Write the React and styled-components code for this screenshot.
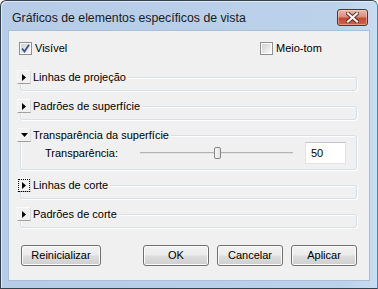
import React from 'react';
import styled, { createGlobalStyle } from 'styled-components';

const GlobalStyle = createGlobalStyle`
  html, body { margin: 0; padding: 0; background: #ffffff; }
  body {
    font-family: "Liberation Sans", Arial, sans-serif;
    font-size: 11px;
    color: #000;
  }
  * { box-sizing: border-box; }
`;

const Window = styled.div`
  width: 378px;
  height: 289px;
  display: flex;
  flex-direction: column;
  border: 1px solid #33414f;
  border-right-color: #3a8fb5;
  border-radius: 6px 6px 0 0;
  padding: 0 7px 7px;
  background: linear-gradient(90deg, #b6cce7 0%, #bcd1ea 90%, #c9dcf1 100%);
  box-shadow: inset 1px 1px 0 rgba(255, 255, 255, 0.55);
`;

const TitleBar = styled.div`
  height: 29px;
  flex: none;
  display: flex;
  align-items: flex-start;
  padding-left: 4px;
`;

const Title = styled.div`
  margin-top: 10px;
  font-size: 12.3px;
  line-height: 15px;
  color: #1b1b1b;
  white-space: nowrap;
`;

const CloseButton = styled.div`
  margin: 8px 2px 0 auto;
  width: 31px;
  height: 17px;
  border: 1px solid #6e2a24;
  border-radius: 3px;
  background: linear-gradient(180deg, #eeb9ad 0%, #dd8d7d 45%, #c6492f 55%, #cf6249 100%);
  box-shadow: inset 0 0 0 1px rgba(255, 220, 210, 0.45);
  display: flex;
  align-items: center;
  justify-content: center;
`;

const Client = styled.div`
  flex: 1;
  display: flex;
  flex-direction: column;
  background: #f0f0f0;
  border: 1px solid #a9bfd8;
  padding: 11px 12px 0 10px;
`;

const CheckRow = styled.div`
  display: grid;
  grid-template-columns: 241px auto;
  height: 13px;
`;

const CheckLabel = styled.label`
  display: flex;
  align-items: center;
  gap: 3px;
  line-height: 13px;
`;

const Box = styled.span`
  width: 13px;
  height: 13px;
  flex: none;
  border: 1px solid #8f8f8f;
  background: linear-gradient(135deg, #cdcdcd 0%, #f6f6f6 85%);
  box-shadow: inset 0 0 0 1px #fbfbfb;
  display: flex;
  align-items: center;
  justify-content: center;
`;

const Sections = styled.div`
  margin-top: 15px;
  display: flex;
  flex-direction: column;
  gap: 8px;
`;

const Group = styled.fieldset`
  margin: 0 0 0 1px;
  padding: 0 0 ${(p) => (p.$open ? '5px' : '6px')} 0;
  border: 1px solid #d5dfe5;
  border-radius: 3px;
  box-shadow: 1px 1px 0 #ffffff, inset 1px 1px 0 #ffffff;
  min-width: 0;
`;

const Legend = styled.legend`
  margin-left: -4px;
  padding: 0 2px 0 0;
  background: #f0f0f0;
`;

const LegendInner = styled.span`
  display: flex;
  align-items: center;
  gap: 2px;
  height: 14px;
`;

const Expander = styled.span`
  width: 14px;
  height: 14px;
  flex: none;
  display: flex;
  align-items: center;
  justify-content: center;
  background: #f0f0f0;
  border-top: 1px solid #fafafa;
  border-left: 1px solid #fafafa;
  border-right: 1px solid #dcdcdc;
  border-bottom: 1px solid #a0a0a0;
`;

const Focus = styled.span`
  display: flex;
  align-items: center;
  justify-content: center;
  width: 10px;
  height: 11px;
  outline: ${(p) => (p.$on ? '1px dotted #000' : 'none')};
`;

const GroupTitle = styled.span`
  line-height: 14px;
  white-space: nowrap;
`;

const SettingRow = styled.div`
  margin-top: 0;
  height: 22px;
  display: flex;
  align-items: center;
  padding-left: 24px;
`;

const SettingLabel = styled.span`
  width: 95px;
  flex: none;
`;

const Slider = styled.div`
  position: relative;
  width: 153px;
  height: 12px;
  flex: none;
  display: flex;
  align-items: center;
`;

const Track = styled.div`
  width: 100%;
  height: 2px;
  border-top: 1px solid #b3b3b3;
  border-bottom: 1px solid #e2e2e2;
`;

const Thumb = styled.div`
  position: absolute;
  top: 0;
  width: 7px;
  height: 12px;
  margin-left: -3px;
  border: 1px solid #858585;
  border-radius: 2px;
  background: linear-gradient(90deg, #f6f6f6 0%, #e4e4e4 100%);
`;

const ValueBox = styled.div`
  margin-left: 12px;
  width: 41px;
  height: 22px;
  border: 1px solid #e0e4ea;
  border-top-color: #c3c6cb;
  background: #ffffff;
  padding-left: 5px;
  line-height: 20px;
`;

const Footer = styled.div`
  margin-top: 17px;
  padding-left: 2px;
  display: flex;
  justify-content: space-between;
`;

const ButtonGroup = styled.div`
  display: flex;
  gap: 8px;
`;

const Button = styled.div`
  width: ${(p) => (p.$wide ? '80px' : '66px')};
  height: 21px;
  border: 1px solid #707070;
  border-radius: 3px;
  background: linear-gradient(180deg, #f2f2f2 0%, #ebebeb 48%, #dddddd 52%, #cfcfcf 100%);
  box-shadow: inset 0 0 0 1px #fbfbfb;
  display: flex;
  align-items: center;
  justify-content: center;
  line-height: 13px;
`;

function Check({ checked, label }) {
  return (
    <CheckLabel>
      <Box>
        {checked && (
          <svg width="9" height="9" viewBox="0 0 9 9">
            <path d="M1 4.5 L3.5 7.5 L8 0.8" fill="none" stroke="#3a4f86" strokeWidth="1.7" />
          </svg>
        )}
      </Box>
      {label}
    </CheckLabel>
  );
}

function Arrow({ open }) {
  return open ? (
    <svg width="7" height="4" viewBox="0 0 7 4">
      <polygon points="0,0 7,0 3.5,4" fill="#000" />
    </svg>
  ) : (
    <svg width="4" height="7" viewBox="0 0 4 7">
      <polygon points="0,0 4,3.5 0,7" fill="#000" />
    </svg>
  );
}

function Section({ title, open, focused, children }) {
  return (
    <Group $open={open}>
      <Legend>
        <LegendInner>
          <Expander>
            <Focus $on={focused}>
              <Arrow open={open} />
            </Focus>
          </Expander>
          <GroupTitle>{title}</GroupTitle>
        </LegendInner>
      </Legend>
      {children}
    </Group>
  );
}

export default function App() {
  const value = 50;
  return (
    <>
      <GlobalStyle />
      <Window>
        <TitleBar>
          <Title>Gráficos de elementos específicos de vista</Title>
          <CloseButton aria-label="Fechar">
            <svg width="13" height="11" viewBox="0 0 13 11">
              <path d="M2 1.5 L11 9.5 M11 1.5 L2 9.5" stroke="#5a2a24" strokeWidth="4" strokeLinecap="square" />
              <path d="M2 1.5 L11 9.5 M11 1.5 L2 9.5" stroke="#f4f4f4" strokeWidth="2.2" strokeLinecap="square" />
            </svg>
          </CloseButton>
        </TitleBar>
        <Client>
          <CheckRow>
            <Check checked label="Visível" />
            <Check label="Meio-tom" />
          </CheckRow>
          <Sections>
            <Section title="Linhas de projeção" />
            <Section title="Padrões de superfície" />
            <Section title="Transparência da superfície" open>
              <SettingRow>
                <SettingLabel>Transparência:</SettingLabel>
                <Slider>
                  <Track />
                  <Thumb style={{ left: `${value}%` }} />
                </Slider>
                <ValueBox>{value}</ValueBox>
              </SettingRow>
            </Section>
            <Section title="Linhas de corte" focused />
            <Section title="Padrões de corte" />
          </Sections>
          <Footer>
            <Button $wide>Reinicializar</Button>
            <ButtonGroup>
              <Button>OK</Button>
              <Button>Cancelar</Button>
              <Button>Aplicar</Button>
            </ButtonGroup>
          </Footer>
        </Client>
      </Window>
    </>
  );
}
